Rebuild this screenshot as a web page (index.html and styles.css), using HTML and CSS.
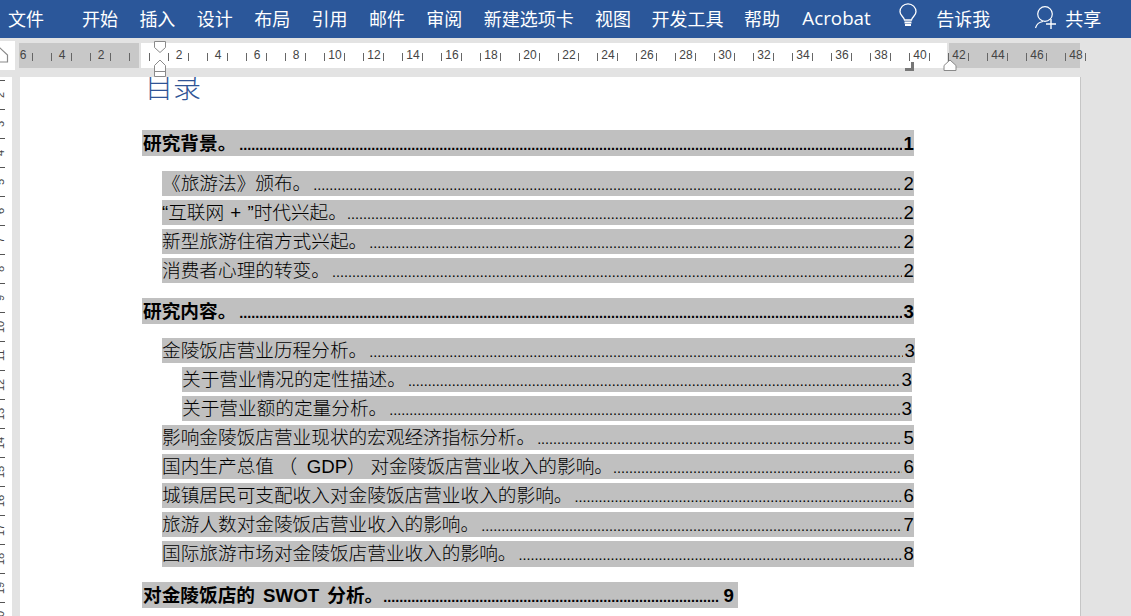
FILE: index.html
```html
<!DOCTYPE html>
<html lang="zh">
<head>
<meta charset="utf-8">
<title>目录</title>
<link rel="stylesheet" href="styles.css">
</head>
<body>
<div class="app">
  <header class="ribbon">
    <span class="tab file">文件</span>
    <span class="tab">开始</span><span class="tab">插入</span><span class="tab">设计</span><span class="tab">布局</span><span class="tab">引用</span><span class="tab">邮件</span><span class="tab">审阅</span><span class="tab">新建选项卡</span><span class="tab">视图</span><span class="tab tight">开发工具</span><span class="tab tight">帮助</span><span class="tab latin">Acrobat</span>
    <svg class="bulb" width="20" height="28" viewBox="0 0 20 28" fill="none" stroke="#fff" stroke-width="1.3"><path d="M6.500 17C6 14 2 12.500 2 8.800A8 8 0 0 1 18 8.800C18 12.500 14 14 13.500 17Z"/><path d="M6.500 19.500H13.500M7 22H13" stroke-width="1.800"/></svg>
    <span class="tab tell">告诉我</span>
    <svg class="person" width="24" height="28" viewBox="0 0 24 28" fill="none" stroke="#fff" stroke-width="1.2"><circle cx="10" cy="10" r="7.300"/><path d="M0.500 24C1.500 20.500 4 18 8 17.500"/><path d="M16 15V25M11 20H21" stroke-width="1.400"/></svg>
    <span class="tab share">共享</span>
  </header>

  <div class="ruler-row">
    <div class="tab-stop"><svg width="14" height="29" viewBox="0 0 14 29" fill="none" stroke="#8a8a8a" stroke-width="1.200"><path d="M-7 14L0 7L7.500 14V21H-7Z"/></svg></div>
    <div class="ruler">
      <div class="ruler-track">
        <span class="cell">6</span><span class="cell">4</span><span class="cell">2</span><span class="cell"></span><span class="cell">2</span><span class="cell">4</span><span class="cell">6</span><span class="cell">8</span><span class="cell">10</span><span class="cell">12</span><span class="cell">14</span><span class="cell">16</span><span class="cell">18</span><span class="cell">20</span><span class="cell">22</span><span class="cell">24</span><span class="cell">26</span><span class="cell">28</span><span class="cell">30</span><span class="cell">32</span><span class="cell">34</span><span class="cell">36</span><span class="cell">38</span><span class="cell">40</span><span class="cell">42</span><span class="cell">44</span><span class="cell">46</span><span class="cell">48</span>
      </div>
    </div>
    <svg class="marker first-indent" width="14" height="14" viewBox="0 0 14 14" fill="#fff" stroke="#8a8a8a"><path d="M1.500 1.500H12.500V7.500L7 12.500L1.500 7.500Z"/></svg>
    <svg class="marker hanging" width="14" height="18" viewBox="0 0 14 18" fill="#fff" stroke="#8a8a8a"><path d="M1.500 6.500L7 1L12.500 6.500V17.500H1.500Z"/><path d="M1.500 12.500H12.500"/></svg>
    <svg class="marker right-indent" width="14" height="12" viewBox="0 0 14 12" fill="#fff" stroke="#8a8a8a"><path d="M1 6.500L7 1L13 6.500V11.500H1Z"/></svg>
    <svg class="marker margin-corner" width="9" height="9" viewBox="0 0 9 9" fill="#777"><path d="M6 0H9V9H0V6H6Z"/></svg>
  </div>

  <main class="workspace">
    <aside class="vruler">
      <span class="vcell">2</span><span class="vcell">3</span><span class="vcell">4</span><span class="vcell">5</span><span class="vcell">6</span><span class="vcell">7</span><span class="vcell">8</span><span class="vcell">9</span><span class="vcell">10</span><span class="vcell">11</span><span class="vcell">12</span><span class="vcell">13</span><span class="vcell">14</span><span class="vcell">15</span><span class="vcell">16</span><span class="vcell">17</span><span class="vcell">18</span><span class="vcell">19</span><span class="vcell">20</span>
    </aside>
    <article class="page">
      <h1 class="title">目录</h1>
      <div class="toc">
        <div class="row l1"><span class="label">研究背景。</span><span class="dots">........................................................................................................................................................................................</span><span class="num">1</span></div>
        <div class="row l2 first"><span class="label">《旅游法》颁布。</span><span class="dots">........................................................................................................................................................................................</span><span class="num">2</span></div>
        <div class="row l2 flush"><span class="label">“互联网 + ”时代兴起。</span><span class="dots">........................................................................................................................................................................................</span><span class="num">2</span></div>
        <div class="row l2"><span class="label">新型旅游住宿方式兴起。</span><span class="dots">........................................................................................................................................................................................</span><span class="num">2</span></div>
        <div class="row l2"><span class="label">消费者心理的转变。</span><span class="dots">........................................................................................................................................................................................</span><span class="num">2</span></div>
        <div class="row l1 section second"><span class="label">研究内容。</span><span class="dots">........................................................................................................................................................................................</span><span class="num">3</span></div>
        <div class="row l2 first wide"><span class="label">金陵饭店营业历程分析。</span><span class="dots">........................................................................................................................................................................................</span><span class="num">3</span></div>
        <div class="row l3"><span class="label">关于营业情况的定性描述。</span><span class="dots">........................................................................................................................................................................................</span><span class="num">3</span></div>
        <div class="row l3"><span class="label">关于营业额的定量分析。</span><span class="dots">........................................................................................................................................................................................</span><span class="num">3</span></div>
        <div class="row l2"><span class="label">影响金陵饭店营业现状的宏观经济指标分析。</span><span class="dots">........................................................................................................................................................................................</span><span class="num">5</span></div>
        <div class="row l2 gdp"><span class="label">国内生产总值 （  GDP） 对金陵饭店营业收入的影响。</span><span class="dots">........................................................................................................................................................................................</span><span class="num">6</span></div>
        <div class="row l2"><span class="label">城镇居民可支配收入对金陵饭店营业收入的影响。</span><span class="dots">........................................................................................................................................................................................</span><span class="num">6</span></div>
        <div class="row l2"><span class="label">旅游人数对金陵饭店营业收入的影响。</span><span class="dots">........................................................................................................................................................................................</span><span class="num">7</span></div>
        <div class="row l2 tall"><span class="label">国际旅游市场对金陵饭店营业收入的影响。</span><span class="dots">........................................................................................................................................................................................</span><span class="num">8</span></div>
        <div class="row l1 section short"><span class="label">对金陵饭店的 SWOT 分析。</span><span class="dots">........................................................................................................................................................................................</span><span class="num spaced">9</span></div>
      </div>
    </article>
  </main>
</div>
</body>
</html>
```
FILE: styles.css
```css
* { box-sizing: border-box; }
html, body { margin: 0; height: 100%; overflow: hidden; }
body { font-family: "Liberation Sans", "Noto Sans CJK SC", sans-serif; background: #e3e3e3; }
.app { position: relative; display: flex; flex-direction: column; height: 616px; width: 1131px; overflow: hidden; }

/* Ribbon */
.ribbon { flex: none; height: 38px; background: #2b579a; color: #fff; display: flex; align-items: center; gap: 21.4px; padding-left: 8px; font-family: "Noto Sans CJK SC", sans-serif; }
.tab { font-size: 18px; line-height: 26px; white-space: nowrap; position: relative; top: -1px; }
.file { margin-right: 16.6px; }
.tight { margin-left: -1px; }
.latin { font-family: "Open Sans", sans-serif; font-size: 18.800px; margin-left: 1px; }
.bulb { flex: none; margin-left: 6.200px; position: relative; top: -2px; }
.tell { margin-left: -3.400px; }
.person { flex: none; margin-left: 23.600px; position: relative; top: -1px; }
.share { margin-left: -15.400px; }

/* Horizontal ruler */
.ruler-row { position: relative; flex: none; height: 39px; display: flex; padding-top: 5px; background: #e3e3e3; }
.tab-stop { position: absolute; left: 0; top: 3px; width: 15px; height: 29px; background: #fff; }
.ruler { margin-left: 19px; width: 1061px; height: 25px; background: linear-gradient(to right, #c8c8c8 0 120px, #e3e3e3 120px 122px, #fff 122px 928px, #e3e3e3 928px 930px, #c8c8c8 930px); }
.ruler-track { display: flex; margin-left: -16.500px; height: 25px; clip-path: inset(0 -30px 0 16.500px); }
.cell { flex: none; width: 39px; display: flex; align-items: center; justify-content: center; padding-left: 2px; font-size: 12px; line-height: 25px; color: #444; position: relative; }
.cell::before, .cell::after { content: ""; position: absolute; top: 10px; width: 1px; height: 8px; background: #666; }
.cell::before { left: 9px; }
.cell::after { left: 29px; }
.marker { position: absolute; display: block; }
.first-indent { left: 153px; top: 2px; }
.hanging { left: 153px; top: 21px; }
.right-indent { left: 943px; top: 21px; }
.margin-corner { left: 905px; top: 24px; }

/* Workspace */
.workspace { flex: 1; min-height: 0; display: flex; background: #e3e3e3; }
.vruler { flex: none; width: 12px; height: 100%; margin-right: 8px; padding-top: 3px; background: #fff; overflow: hidden; display: flex; flex-direction: column; }
.vcell { flex: none; height: 29px; position: relative; display: flex; align-items: center; justify-content: center; font-size: 11px; color: #444; writing-mode: vertical-rl; transform: rotate(180deg); padding-left: 15px; }
.vcell::before { content: ""; position: absolute; right: 0; bottom: 0; width: 5px; height: 1px; background: #555; }

/* Page */
.page { flex: none; width: 1061px; height: 100%; background: #fff; border-right: 1px solid #c6c6c6; overflow: hidden; color: #000; }
.title { margin: -12px 0 0 125px; height: 65px; font-size: 28px; line-height: 48px; font-weight: 300; color: #2f5496; letter-spacing: 0; }
.toc { margin-left: 122px; width: 772px; display: flex; flex-direction: column; align-items: flex-start; }
.row { display: flex; align-items: baseline; width: 100%; height: 25px; margin-bottom: 4px; background: #c0c0c0; font-size: 18.670px; line-height: 25px; white-space: nowrap; font-weight: 300; }
.label { flex: none; white-space: pre; }
.dots { flex: 1; min-width: 0; overflow: hidden; padding-left: 2px; font-size: 14.400px; }
.num { flex: none; margin-left: 2px; }
.l1 { height: 26px; margin-bottom: 15px; padding-left: 1px; font-weight: 700; line-height: 27px; }
.l1 .dots { padding-left: 3px; }
.l2 { width: 752px; margin-left: 20px; }
.l3 { width: 730px; margin-left: 40px; }
.section { margin-top: 11px; }
.second { margin-bottom: 14px; }
.first { margin-top: 0; }
.wide { width: 753px; }
.tall { height: 26px; }
.flush .label { word-spacing: 1px; }
.flush .dots, .gdp .dots { padding-left: 0; }
.gdp .label { word-spacing: -0.500px; }
.short { width: 596px; margin-top: 11px; }
.short .label { word-spacing: 3px; }
.short .dots { padding-left: 0; }
.spaced { margin-left: 5px; margin-right: 4px; }
```
